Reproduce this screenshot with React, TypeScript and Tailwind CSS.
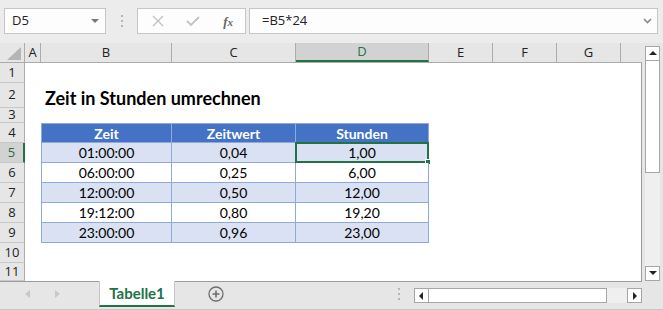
import React from 'react';

const COLS = [
  { key: 'A', w: 'w-[16px]' },
  { key: 'B', w: 'w-[131px]' },
  { key: 'C', w: 'w-[124px]' },
  { key: 'D', w: 'w-[133px]' },
  { key: 'E', w: 'w-[64px]' },
  { key: 'F', w: 'w-[64px]' },
  { key: 'G', w: 'w-[64px]' },
  { key: '', w: 'w-[21px]' },
];

const ROWS = [
  { n: 1, h: 'h-[20px]' },
  { n: 2, h: 'h-[25px]' },
  { n: 3, h: 'h-[15px]' },
  { n: 4, h: 'h-[20px]' },
  { n: 5, h: 'h-[20px]' },
  { n: 6, h: 'h-[20px]' },
  { n: 7, h: 'h-[20px]' },
  { n: 8, h: 'h-[20px]' },
  { n: 9, h: 'h-[20px]' },
  { n: 10, h: 'h-[20px]' },
  { n: 11, h: 'h-[18px]' },
];

const DATA: Record<number, string[]> = {
  5: ['01:00:00', '0,04', '1,00'],
  6: ['06:00:00', '0,25', '6,00'],
  7: ['12:00:00', '0,50', '12,00'],
  8: ['19:12:00', '0,80', '19,20'],
  9: ['23:00:00', '0,96', '23,00'],
};

function ArrowBox({ dir }: { dir: 'up' | 'down' | 'left' | 'right' }) {
  const pts = {
    up: '1,6 9,6 5,2',
    down: '1,2 9,2 5,6',
    left: '6,1 6,9 2,5',
    right: '3,1 3,9 7,5',
  }[dir];
  return (
    <div className="w-[15px] h-[15px] bg-white border border-[#a6a6a6] flex items-center justify-center shrink-0">
      <svg width="10" height="10" viewBox="0 0 10 10">
        <polygon points={pts} fill="#222" />
      </svg>
    </div>
  );
}

export default function App() {
  return (
    <div className="w-[663px] h-[310px] overflow-hidden bg-[#e6e6e6] flex flex-col font-['Open_Sans',sans-serif]">
      {/* formula bar */}
      <div className="h-[43px] shrink-0 flex items-start pt-[8px] bg-[#ececec]">
        <div className="ml-[4px] w-[102px] h-[26px] bg-[#fdfdfd] border border-[#c6c6c6] flex items-center justify-between pl-[7px] pr-[6px]">
          <span className="text-[13px] text-[#222]">D5</span>
          <svg width="8" height="5" viewBox="0 0 8 5"><polygon points="0,0 8,0 4,4" fill="#777" /></svg>
        </div>
        <div className="w-[31px] h-[26px] flex flex-col items-center justify-center gap-[3px]">
          <span className="w-[2px] h-[2px] bg-[#b5b5b5]" />
          <span className="w-[2px] h-[2px] bg-[#b5b5b5]" />
          <span className="w-[2px] h-[2px] bg-[#b5b5b5]" />
        </div>
        <div className="w-[109px] h-[26px] bg-[#fdfdfd] border border-[#c6c6c6] flex items-center">
          <div className="w-[36px] flex justify-center ml-[2px]">
            <svg width="12" height="12" viewBox="0 0 12 12"><path d="M1 1 L11 11 M11 1 L1 11" stroke="#c2c2c2" strokeWidth="1.4" /></svg>
          </div>
          <div className="w-[36px] flex justify-center">
            <svg width="14" height="12" viewBox="0 0 14 12"><path d="M1 6 L5 10 L13 2" stroke="#c2c2c2" strokeWidth="1.8" fill="none" /></svg>
          </div>
          <div className="w-[34px] flex justify-center">
            <span className="font-['Liberation_Serif',serif] italic font-bold text-[13px] text-[#666] leading-none">f<span className="text-[11px]">x</span></span>
          </div>
        </div>
        <div className="ml-[3px] w-[409px] h-[26px] bg-[#fdfdfd] border border-[#c6c6c6] flex items-center justify-between pl-[12px] pr-[5px]">
          <span className="text-[13px] text-[#222]">=B5*24</span>
          <svg width="9" height="6" viewBox="0 0 9 6"><path d="M1 1 L4.5 4.5 L8 1" stroke="#888" strokeWidth="1.6" fill="none" /></svg>
        </div>
      </div>

      {/* sheet + vertical scrollbar */}
      <div className="h-[238px] shrink-0 flex">
        <div className="w-[642px] flex flex-col">
          {/* column headers */}
          <div className="h-[20px] flex border-b border-[#ababab] bg-[#e6e6e6]">
            <div className="w-[25px] border-r border-[#ababab] flex items-end justify-end pr-[3px] pb-[2px]">
              <svg width="14" height="13" viewBox="0 0 14 13"><polygon points="14,0 14,13 0,13" fill="#b5b5b5" /></svg>
            </div>
            {COLS.map((c) =>
              c.key === 'D' ? (
                <div key={c.key} className={`${c.w} border-r border-[#ababab] bg-[#d2d2d2] border-b-2 border-b-[#217346] flex items-center justify-center text-[13px] text-[#217346]`}>
                  {c.key}
                </div>
              ) : (
                <div key={c.key || 'x'} className={`${c.w} ${c.key ? 'border-r border-[#ababab]' : ''} flex items-center justify-center text-[13px] text-[#222]`}>
                  {c.key}
                </div>
              )
            )}
          </div>

          {/* rows */}
          <div className="flex-1 flex flex-col bg-white border-r border-b border-[#9c9c9c]">
            {ROWS.map((r) => (
              <div key={r.n} className={`${r.h} flex shrink-0`}>
                {r.n === 5 ? (
                  <div className="w-[25px] shrink-0 bg-[#d2d2d2] border-r-2 border-[#217346] border-b border-b-[#c8c8c8] flex items-center justify-center text-[13px] text-[#217346]">
                    {r.n}
                  </div>
                ) : (
                  <div className="w-[25px] shrink-0 bg-[#e6e6e6] border-r border-[#ababab] border-b border-b-[#c8c8c8] flex items-center justify-center text-[13px] text-[#222]">
                    {r.n}
                  </div>
                )}
                <div className="w-[16px] shrink-0" />
                <RowCells n={r.n} />
              </div>
            ))}
          </div>
        </div>

        {/* vertical scrollbar */}
        <div className="w-[21px] flex flex-col pl-[3px] pr-[3px] pt-[3px]">
          <ArrowBox dir="up" />
          <div className="h-[112px] bg-white border-x border-b border-[#a6a6a6]" />
          <div className="flex-1 bg-[#efefef]" />
          <ArrowBox dir="down" />
        </div>
      </div>

      {/* sheet tabs */}
      <div className="flex-1 flex items-start border-b border-[#c6c6c6]">
        <div className="w-[99px] h-[26px] flex items-center">
          <svg className="ml-[25px]" width="6" height="8" viewBox="0 0 6 8"><polygon points="5,0 5,8 0,4" fill="#c8c8c8" /></svg>
          <svg className="ml-[23px]" width="6" height="8" viewBox="0 0 6 8"><polygon points="1,0 1,8 6,4" fill="#c8c8c8" /></svg>
        </div>
        <div className="w-[76px] h-[26px] bg-white border-x border-[#c6c6c6] border-b-2 border-b-[#217346] flex items-center justify-center">
          <span className="font-['Lato',sans-serif] font-bold text-[15px] text-[#217346]">Tabelle1</span>
        </div>
        <div className="ml-[33px] h-[26px] flex items-center">
          <svg width="16" height="16" viewBox="0 0 16 16">
            <circle cx="8" cy="8" r="7" fill="none" stroke="#6e6e6e" strokeWidth="1.3" />
            <path d="M8 4.5 V11.5 M4.5 8 H11.5" stroke="#6e6e6e" strokeWidth="1.6" />
          </svg>
        </div>
        <div className="ml-[174px] h-[26px] flex flex-col items-center justify-center gap-[3px]">
          <span className="w-[2px] h-[2px] bg-[#b5b5b5]" />
          <span className="w-[2px] h-[2px] bg-[#b5b5b5]" />
          <span className="w-[2px] h-[2px] bg-[#b5b5b5]" />
        </div>
        <div className="ml-[14px] mt-[7px] flex">
          <ArrowBox dir="left" />
          <div className="w-[178px] h-[15px] bg-white border-y border-r border-[#a6a6a6]" />
          <div className="w-[20px] h-[15px] bg-[#efefef]" />
          <ArrowBox dir="right" />
        </div>
      </div>
    </div>
  );
}

function RowCells({ n }: { n: number }) {
  if (n === 2) {
    return (
      <div className="flex-1 flex items-end pl-[4px] pb-[1px]">
        <span className="font-['Lato',sans-serif] font-bold text-[18px] leading-none text-black whitespace-nowrap">Zeit in Stunden umrechnen</span>
      </div>
    );
  }
  if (n === 4) {
    const heads = ['Zeit', 'Zeitwert', 'Stunden'];
    const ws = ['w-[131px]', 'w-[124px]', 'w-[133px]'];
    return (
      <div className="flex font-['Lato',sans-serif]">
        {heads.map((h, i) => (
          <div key={h} className={`${ws[i]} shrink-0 bg-[#4472c4] border-t border-b border-r border-[#8ea9db] ${i === 0 ? 'border-l' : ''} flex items-center justify-center text-[14px] font-bold text-white`}>
            {h}
          </div>
        ))}
      </div>
    );
  }
  const row = DATA[n];
  if (!row) return null;
  const ws = ['w-[131px]', 'w-[124px]', 'w-[133px]'];
  const bg = n % 2 === 1 ? 'bg-[#d9e1f2]' : 'bg-white';
  return (
    <div className="flex font-['Lato',sans-serif]">
      {row.map((v, i) => (
        <div key={i} className={`${ws[i]} shrink-0 relative ${bg} border-b border-r border-[#8ea9db] ${i === 0 ? 'border-l' : ''} flex items-center justify-center text-[14px] text-black`}>
          {v}
          {n === 5 && i === 2 && (
            <div className="absolute -left-[1px] -top-[1px] -right-[1px] -bottom-[1px] border-2 border-[#217346]">
              <div className="absolute -right-[4px] -bottom-[4px] w-[6px] h-[6px] bg-[#217346] border border-white" />
            </div>
          )}
        </div>
      ))}
    </div>
  );
}
